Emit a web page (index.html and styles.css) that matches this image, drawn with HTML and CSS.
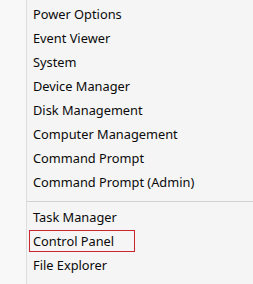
FILE: index.html
```html
<!DOCTYPE html>
<html>
<head>
<meta charset="utf-8">
<link rel="stylesheet" href="styles.css">
</head>
<body>
<div class="screen">
  <div class="gutter"></div>
  <div class="menu">
    <div class="group">
      <div class="item">Power Options</div>
      <div class="item">Event Viewer</div>
      <div class="item">System</div>
      <div class="item">Device Manager</div>
      <div class="item">Disk Management</div>
      <div class="item">Computer Management</div>
      <div class="item">Command Prompt</div>
      <div class="item">Command Prompt (Admin)</div>
    </div>
    <div class="sep"></div>
    <div class="group">
      <div class="item">Task Manager</div>
      <div class="item"><span class="mark">Control Panel</span></div>
      <div class="item">File Explorer</div>
    </div>
  </div>
</div>
</body>
</html>
```
FILE: styles.css
```css
html, body {
  margin: 0;
  padding: 0;
  background: #f7f7f7;
}
.screen {
  display: flex;
  width: 253px;
  height: 284px;
  overflow: hidden;
}
.gutter {
  width: 26px;
  flex: none;
  background: #f8f8f8;
  border-right: 1px solid #dcdcdc;
}
.menu {
  flex: 1;
  background: #f5f5f5;
  padding-top: 2px;
  font-family: "Noto Sans", "Open Sans", sans-serif;
  font-size: 12.8px;
  color: #0a0a0a;
}
.item {
  height: 24px;
  line-height: 24px;
  padding-left: 6px;
  white-space: nowrap;
}
.sep {
  height: 1px;
  background: #d2d2d2;
  margin: 7px 0 3px;
}
.mark {
  display: inline-block;
  margin-left: -4px;
  padding: 0 20px 0 3px;
  line-height: 20px;
  border: 1px solid #c8252c;
}
```
